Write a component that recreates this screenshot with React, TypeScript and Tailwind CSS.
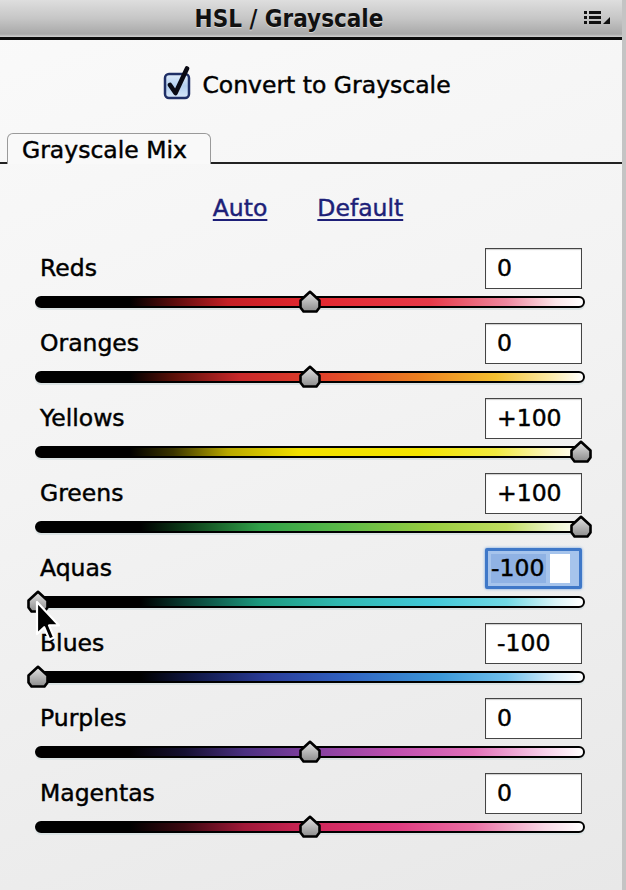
import React from 'react';

type Channel = { name: string; value: number; track: string };

const CHANNELS: Channel[] = [
  {
    name: 'Reds',
    value: 0,
    track:
      'bg-[linear-gradient(to_right,#000_0%,#000_17%,#5a0c0c_25%,#c42026_35%,#e2282f_50%,#e63a48_72%,#ee88a0_86%,#fbe6ea_95%,#fff_100%)]',
  },
  {
    name: 'Oranges',
    value: 0,
    track:
      'bg-[linear-gradient(to_right,#000_0%,#000_17%,#5a1008_25%,#c8282a_37%,#e0402a_52%,#ec8020_70%,#f4c030_84%,#fbeaa8_94%,#fff_100%)]',
  },
  {
    name: 'Yellows',
    value: 100,
    track:
      'bg-[linear-gradient(to_right,#000_0%,#000_17%,#3a3400_25%,#b8a800_35%,#f0e000_48%,#f2e400_70%,#f0ea40_84%,#faf6c0_94%,#fff_100%)]',
  },
  {
    name: 'Greens',
    value: 100,
    track:
      'bg-[linear-gradient(to_right,#000_0%,#000_19%,#0c3a18_27%,#30a048_41%,#58b848_55%,#98cc40_72%,#c0dc60_86%,#eef6d0_95%,#fff_100%)]',
  },
  {
    name: 'Aquas',
    value: -100,
    track:
      'bg-[linear-gradient(to_right,#000_0%,#000_19%,#083a30_27%,#1c9a80_41%,#30b8b0_55%,#40c8d8_72%,#70d8e4_86%,#d8f4f8_95%,#fff_100%)]',
  },
  {
    name: 'Blues',
    value: -100,
    track:
      'bg-[linear-gradient(to_right,#000_0%,#000_19%,#101848_29%,#2a3c98_42%,#3060c0_56%,#3c98d8_74%,#70c0ec_86%,#d8eefa_95%,#fff_100%)]',
  },
  {
    name: 'Purples',
    value: 0,
    track:
      'bg-[linear-gradient(to_right,#000_0%,#000_17%,#141030_27%,#4a3080_38%,#8040a0_50%,#c050b0_66%,#e070b8_80%,#f6d0ea_93%,#fff_100%)]',
  },
  {
    name: 'Magentas',
    value: 0,
    track:
      'bg-[linear-gradient(to_right,#000_0%,#000_17%,#3c0810_27%,#a01838_38%,#d02658_50%,#e03c80_66%,#ea70a4_80%,#f8d8e6_93%,#fff_100%)]',
  },
];

const FONT = "font-['DejaVu_Sans','Verdana',sans-serif]";
const HEAVY = '[-webkit-text-stroke:0.45px_currentColor]';

function Thumb({ value }: { value: number }) {
  // track inner width ~543px, thumb centre at 3px for -100
  const left = 3 + ((value + 100) / 200) * 543 - 13;
  return (
    <svg
      width="26"
      height="24"
      viewBox="0 0 26 24"
      className="absolute top-[1px]"
      style={{ left }}
    >
      <defs>
        <linearGradient id="thumbFill" x1="0" y1="0" x2="0" y2="1">
          <stop offset="0" stopColor="#e6e6e6" />
          <stop offset="0.55" stopColor="#b4b4b4" />
          <stop offset="1" stopColor="#8c8c8c" />
        </linearGradient>
      </defs>
      <path
        d="M13 1.8 L22.5 10.5 L22.5 17.5 L19.5 21.5 L6.5 21.5 L3.5 17.5 L3.5 10.5 Z"
        fill="url(#thumbFill)"
        stroke="#000"
        strokeWidth="2.6"
        strokeLinejoin="round"
      />
    </svg>
  );
}

function ValueBox({ value, focused }: { value: number; focused: boolean }) {
  const text = value > 0 ? `+${value}` : value < 0 ? `-${Math.abs(value)}` : '0';
  if (focused) {
    return (
      <div className="mr-[3px] flex h-[41px] w-[97px] items-stretch rounded-[2px] border-[3px] border-[#3f78c8] bg-[#a6c4ec] p-[3px] shadow-[0_0_3px_#6a9ee0]">
        <span className={`flex items-center bg-[#8fb2e4] pr-[2px] text-[23.5px] leading-none text-black ${HEAVY}`}>
          {text}
        </span>
        <span className="ml-[4px] w-[20px] bg-white" />
      </div>
    );
  }
  return (
    <div
      className={`mr-[3px] flex h-[41px] w-[97px] items-center border border-[#444] bg-white pl-[11px] text-[23.5px] text-black shadow-[inset_0_1px_1px_rgba(0,0,0,0.2)] ${HEAVY}`}
    >
      {text}
    </div>
  );
}

function MenuIcon() {
  return (
    <svg width="28" height="14" viewBox="0 0 28 14">
      <rect x="0" y="0" width="3" height="3" fill="#111" />
      <rect x="5" y="0" width="12" height="3" fill="#111" />
      <rect x="0" y="5" width="3" height="3" fill="#111" />
      <rect x="5" y="5" width="12" height="3" fill="#111" />
      <rect x="0" y="10" width="3" height="3" fill="#111" />
      <rect x="5" y="10" width="12" height="3" fill="#111" />
      <path d="M26 6 L26 13 L19 13 Z" fill="#111" />
    </svg>
  );
}

function CheckBox() {
  return (
    <svg width="30" height="34" viewBox="0 0 30 34">
      <defs>
        <linearGradient id="cbFill" x1="0" y1="0" x2="0" y2="1">
          <stop offset="0" stopColor="#e0ecfa" />
          <stop offset="0.5" stopColor="#b4d0f0" />
          <stop offset="1" stopColor="#d8e8fa" />
        </linearGradient>
      </defs>
      <rect x="2" y="8" width="24" height="24" rx="4" fill="url(#cbFill)" stroke="#1f2f66" strokeWidth="2.5" />
      <path
        d="M7 19 L12.5 27 L24 2.5"
        fill="none"
        stroke="#0a0a14"
        strokeWidth="4.6"
        strokeLinecap="round"
        strokeLinejoin="round"
      />
    </svg>
  );
}

function Cursor() {
  return (
    <svg
      width="26"
      height="42"
      viewBox="0 0 13 21"
      className="pointer-events-none absolute left-[35px] top-[600px]"
    >
      <path
        d="M1 1 L1 17 L4.6 13.6 L7.2 19.8 L9.6 18.8 L7 12.7 L12 12.7 Z"
        fill="#000"
        stroke="#fff"
        strokeWidth="1.1"
        strokeLinejoin="round"
      />
    </svg>
  );
}

export default function App() {
  return (
    <div
      className={`relative h-[890px] w-[626px] overflow-hidden border-r-[4px] border-[#c4c4c4] bg-[linear-gradient(160deg,#fafafa_0%,#f3f3f3_45%,#e8e8e8_100%)] ${FONT}`}
    >
      {/* Panel header */}
      <div className="relative flex h-[40px] items-center justify-center border-b-[3px] border-[#0c0c0c] bg-[linear-gradient(to_bottom,#dedede_0%,#c6c6c6_50%,#a9a9a9_92%,#d0d0d0_100%)] pr-[44px]">
        <span className="text-[24px] font-bold text-[#111] [font-stretch:condensed] [text-shadow:0_1px_0_rgba(255,255,255,0.5)] font-['DejaVu_Sans_Condensed','DejaVu_Sans',sans-serif]">
          HSL / Grayscale
        </span>
        <div className="absolute right-[10px] top-[11px]">
          <MenuIcon />
        </div>
      </div>

      {/* Convert checkbox */}
      <div className="mt-[22px] flex items-center justify-center gap-[9px] pr-[8px]">
        <CheckBox />
        <span className={`mt-[6px] text-[23.5px] text-black ${HEAVY}`}>Convert to Grayscale</span>
      </div>

      {/* Tab strip */}
      <div className="mt-[30px] flex items-end">
        <div className="w-[7px] border-b-2 border-[#222]" />
        <div
          className={`flex h-[31px] w-[204px] items-center rounded-t-[6px] border border-b-0 border-[#9a9a9a] bg-[#f9f9f9] pl-[14px] pt-[2px] text-[23.5px] text-black ${HEAVY}`}
        >
          Grayscale Mix
        </div>
        <div className="flex-1 border-b-2 border-[#222]" />
      </div>

      {/* Auto / Default */}
      <div className={`mt-[30px] flex justify-center gap-[50px] pr-[6px] ${HEAVY}`}>
        <span className="text-[23.5px] leading-[28px] text-[#1d1f78] underline decoration-[2px] underline-offset-[3px]">
          Auto
        </span>
        <span className="text-[23.5px] leading-[28px] text-[#1d1f78] underline decoration-[2px] underline-offset-[3px]">
          Default
        </span>
      </div>

      {/* Sliders */}
      <div className="mt-[26px] flex flex-col pl-[35px] pr-[37px]">
        {CHANNELS.map((c) => (
          <div key={c.name} className="flex h-[75px] flex-col">
            <div className="flex h-[41px] items-center justify-between">
              <span className={`ml-[5px] text-[23.5px] text-black ${HEAVY}`}>{c.name}</span>
              <ValueBox value={c.value} focused={c.name === 'Aquas'} />
            </div>
            <div className="relative h-[24px]">
              <div
                className={`mt-[7px] h-[12px] rounded-full border-[2.5px] border-black shadow-[0_2px_0_#dbe3e4] ${c.track}`}
              />
              <Thumb value={c.value} />
            </div>
          </div>
        ))}
      </div>

      <Cursor />
    </div>
  );
}
